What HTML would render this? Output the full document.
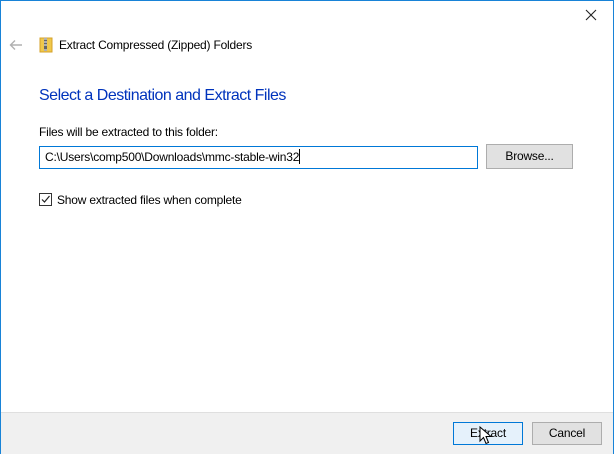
<!DOCTYPE html>
<html><head><style>
body{margin:0;width:614px;height:454px;overflow:hidden;font-family:"Liberation Sans",sans-serif;font-size:12px;color:#000;letter-spacing:-0.2px;}
.win{position:absolute;left:0;top:0;width:612px;height:452px;border:1px solid #1883d7;background:#fff;}
.abs{position:absolute;}
.btn{position:absolute;border:1px solid #adadad;background:#e1e1e1;text-align:center;box-sizing:border-box;line-height:20px;}
</style></head><body>
<div class="win">
<svg class="abs" style="left:584px;top:8px" width="12" height="12"><path d="M1 1L11 11M11 1L1 11" stroke="#222" stroke-width="1.1"/></svg>
<svg class="abs" style="left:8px;top:38px" width="14" height="12"><path d="M13 6H2M6 1.5L1.5 6 6 10.5" stroke="#b0b0b0" stroke-width="1.4" fill="none"/></svg>
<svg class="abs" style="left:38px;top:36px" width="14" height="16"><rect x="1" y="1" width="12" height="14" fill="#f0c84a" stroke="#d4a12a"/><rect x="5" y="1" width="3" height="13" fill="#b0b0b0"/><rect x="5" y="3" width="3" height="1" fill="#666"/><rect x="5" y="6" width="3" height="1" fill="#666"/><rect x="5" y="9" width="3" height="3" fill="#666"/></svg>
<div class="abs" style="left:58px;top:37px;">Extract Compressed (Zipped) Folders</div>
<div class="abs" style="left:38px;top:86px;font-size:16px;color:#0033bc;letter-spacing:-0.5px;">Select a Destination and Extract Files</div>
<div class="abs" style="left:38px;top:124px;">Files will be extracted to this folder:</div>
<div class="abs" style="left:38px;top:145px;height:21px;border:1px solid #0078d7;line-height:21px;padding-left:5px;width:432px;">C:\Users\comp500\Downloads\mmc-stable-win32<span style="display:inline-block;width:1px;height:15px;background:#000;vertical-align:-3px"></span></div>
<div class="btn" style="left:485px;top:143px;width:87px;height:25px;line-height:23px;">Browse...</div>
<div class="abs" style="left:38px;top:192px;width:11px;height:11px;border:1px solid #333;background:#fff;"><svg width="11" height="11" style="display:block"><path d="M2 5.5L4.5 8 9.5 2" stroke="#222" stroke-width="1.2" fill="none"/></svg></div>
<div class="abs" style="left:56px;top:192px;">Show extracted files when complete</div>
<div class="abs" style="left:0;top:411px;width:612px;height:41px;background:#f0f0f0;border-top:1px solid #dfdfdf;"></div>
<div class="btn" style="left:452px;top:421px;width:70px;height:23px;border-color:#0078d7;background:#e5f1fb;">Extract</div>
<div class="btn" style="left:531px;top:421px;width:70px;height:23px;">Cancel</div>
<svg class="abs" style="left:478px;top:425px" width="14" height="20"><path d="M1 1V15L4.5 11.5 7 17.5 9.5 16.5 7 10.5H12Z" fill="#fff" stroke="#000" stroke-width="1"/></svg>
</div>
</body></html>
